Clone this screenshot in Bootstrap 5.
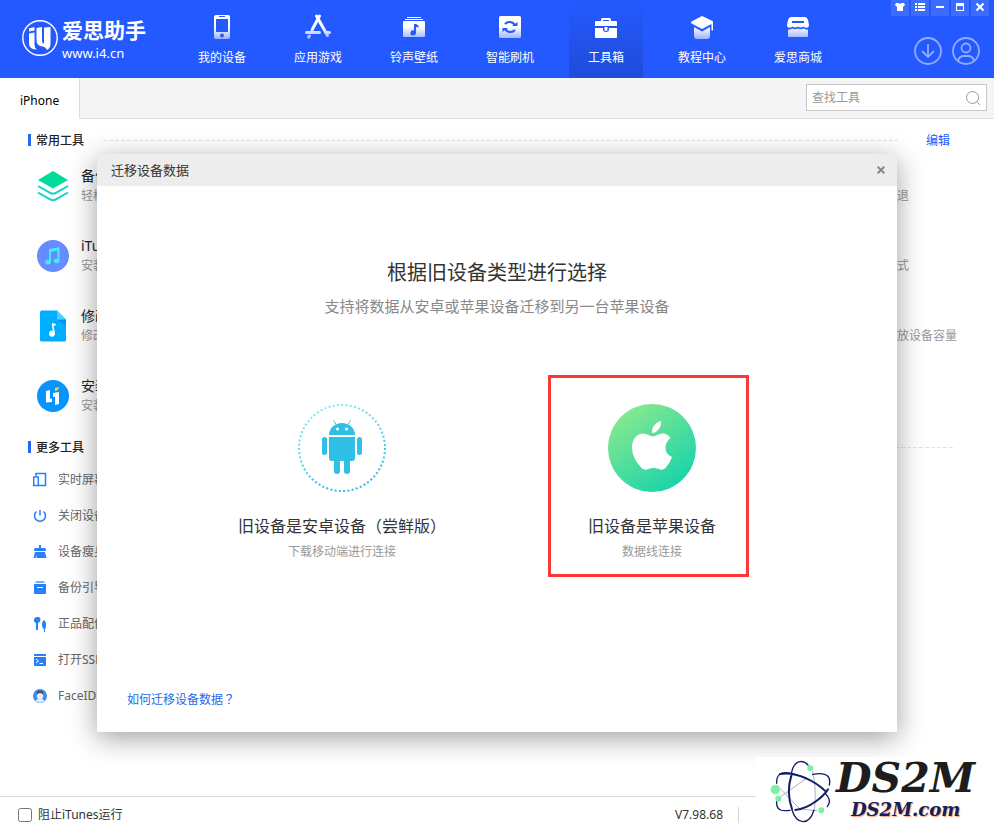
<!DOCTYPE html>
<html lang="zh-CN">
<head>
<meta charset="utf-8">
<meta name="viewport" content="width=device-width, initial-scale=1">
<title>爱思助手</title>
<link href="https://cdn.jsdelivr.net/npm/bootstrap@5.3.0/dist/css/bootstrap.min.css" rel="stylesheet">
<style>
body{font-family:"Noto Sans","Noto Sans CJK SC",sans-serif;font-size:12px;line-height:20px;color:#333;background:#fff}
svg{display:block;flex:none}
button{font:inherit;border:0;background:none;padding:0;color:inherit}
.app-head{background:#2459ff;color:#fff;min-height:78px}
.brand-box{width:185px;padding:20px 0 0 22px;gap:4px;color:#fff}
.brand-words{margin-top:-4px}
.brand-name{font-size:21px;line-height:28px;font-weight:700}
.brand-url{font-size:13px;line-height:18px}
.main-nav{gap:22px}
.main-nav a{width:74px;height:78px;padding-top:13px;color:#fff;gap:7px}
.main-nav a.active{background:linear-gradient(#2459ff,#1f4cd9)}
.win-btn{width:18px;height:16px;background:rgba(255,255,255,.11)}
.win-set{gap:2px;padding-right:5px}
.round-set{gap:10px;padding:21px 14px 0 0}
.tab-strip{background:#f5f5f5;border-bottom:1px solid #dcdcdc;height:41px}
.tab-strip .tab-on{background:#fff;border-right:1px solid #dcdcdc;color:#000;padding:4px 20px 0;height:41px;width:80px}
.find-box{width:181px;height:27px;border:1px solid #c8c8c8;background:#fff;margin:6px 7px 0 0;padding:0 5px}
.find-box input{border:0;outline:0;min-width:0;width:100%;padding:0;font-size:12px;background:none}
.find-box input::placeholder{color:#999}
main{padding-top:11px}
.sec-head{padding-left:28px;height:20px}
.sec-head h2{font-size:12px;line-height:14px;height:12px;margin:0;border-left:3px solid #2468f2;padding-left:5px;color:#222}
.sec-head .rule{height:1px;margin-left:19px;background:repeating-linear-gradient(90deg,#e4e4e4 0 4px,transparent 4px 6px)}
.sec-head a{color:#2459ff;margin:0 44px 0 28px;padding-top:2px}
.end-41{margin-right:41px}
.tool-list{padding:1px 0 6px}
.tool-row{height:70px;padding-left:37px;color:#999}
.tool-row h3{font-size:14px;line-height:20px;margin:0;color:#222;font-weight:400}
.tool-row p{line-height:20px;margin:0}
.tool-row .side{width:109px;padding-top:20px;line-height:20px}
.more-list{padding:5px 0 0 32px}
.more-list a{height:36px;gap:10px;color:#666}
.layer{top:35px}
.dlg{width:800px;max-width:100%;background:#fff;box-shadow:0 6px 26px rgba(0,0,0,.38)}
.dlg-top{background:#ededed;height:32px;padding:0 12px 0 14px}
.dlg-top h1{font-size:13px;line-height:18px;margin:0;font-weight:400}
.dlg-body{padding:73px 0 22px}
.dlg-body h2{font-size:20px;line-height:28px;margin:0 0 9px;font-weight:400}
.dlg-body .hint{font-size:15px;color:#888;margin:0 0 59px}
.choices{max-width:620px}
.choice{min-width:201px;border:3px solid transparent!important;padding:26px 0 12px!important}
.choice.picked{border-color:#fb3838!important;padding-left:7px!important;margin-right:7px}
.choice strong{font-size:16px;line-height:24px;font-weight:400;margin:22px 0 4px;white-space:nowrap}
.choice small{font-size:12px;color:#999}
.punct{font-family:"Noto Sans CJK TC",sans-serif}
.help-link{color:#2468f2;margin:112px 0 0 30px;display:inline-block}
footer{border-top:1px solid #dcdcdc;min-height:31px;padding:5px 255px 0 18px}
footer input{width:14px;height:14px;margin:0}
footer .ver{padding-right:15px;border-right:1px solid #d5d5d5;line-height:16px}
.block-set{gap:6px}
.stamp{right:0;bottom:0;width:238px;height:70px;background:#fff;padding-left:14px}
.stamp-a{font:italic 900 41px/42px "DejaVu Serif",serif;color:#1d1d1d;padding-left:2px}
.stamp-b{font:italic 700 18px/22px "DejaVu Serif",serif;color:#14205c;text-shadow:1px 1px 1px #f5a27c;padding-left:17px}
</style>
<script src="https://cdn.jsdelivr.net/npm/bootstrap@5.3.0/dist/js/bootstrap.bundle.min.js"></script>
</head>
<body class="d-flex flex-column min-vh-100 position-relative">
<svg width="0" height="0" class="position-absolute" aria-hidden="true"><defs>
<linearGradient id="fade" gradientUnits="userSpaceOnUse" x1="0" y1="3" x2="0" y2="27"><stop offset=".45" stop-color="#fff"/><stop offset="1" stop-color="#91abff"/></linearGradient>
<linearGradient id="ring" x1=".2" y1="0" x2=".6" y2="1"><stop offset="0" stop-color="#8ae9f3"/><stop offset="1" stop-color="#2dbbe5"/></linearGradient>
<linearGradient id="green" x1=".15" y1=".05" x2=".8" y2=".95"><stop offset="0" stop-color="#8be98f"/><stop offset="1" stop-color="#17d3aa"/></linearGradient>
</defs></svg>

<header class="app-head d-flex">
  <a href="#" class="brand-box d-flex text-decoration-none">
    <svg width="36" height="36" viewBox="0 0 36 36"><circle cx="18" cy="18" r="17.200" fill="none" stroke="#fff" stroke-width="1.400"/><path fill="#fff" d="M7 8.500L12.500 7v3.500L7 11.500zM7 13.500l5.500-1V25q0 3 2.500 4.500-8 0-8-6zM14.500 8L20 7v14q0 2.500 2 2.500V7.500L28.500 7v17q0 4-3.500 6-1-3-4-3.500-6.500-.5-6.500-6z"/></svg>
    <span class="brand-words"><span class="brand-name d-block">爱思助手</span><span class="brand-url d-block">www.i4.cn</span></span>
  </a>
  <nav class="main-nav d-flex text-center">
    <a href="#" class="d-flex flex-column align-items-center text-decoration-none"><svg width="28" height="28" viewBox="0 0 28 28"><path fill="url(#fade)" fill-rule="evenodd" d="M8 2h12a2 2 0 0 1 2 2v20a2 2 0 0 1-2 2H8a2 2 0 0 1-2-2V4a2 2 0 0 1 2-2zM8 6v13h12V6zM11 3v1h6V3zM14 20.500a2 2 0 1 0 .01 0z"/></svg><span class="pt-1 lh-1">我的设备</span></a>
    <a href="#" class="d-flex flex-column align-items-center text-decoration-none"><svg width="28" height="28" viewBox="0 0 28 28" fill="none" stroke="url(#fade)" stroke-width="3" stroke-linecap="round"><path d="M12.500 3l11 19.500M15.500 3L8 17M2.500 19.500h13M21.500 19.500h4M5.500 23l-1 1.200"/></svg><span class="pt-1 lh-1">应用游戏</span></a>
    <a href="#" class="d-flex flex-column align-items-center text-decoration-none"><svg width="28" height="28" viewBox="0 0 28 28"><path fill="#fff" d="M7 4h14v1H7zM5 6h18v1H5z"/><path fill="url(#fade)" fill-rule="evenodd" d="M4 8h20a1 1 0 0 1 1 1v14a1 1 0 0 1-1 1H4a1 1 0 0 1-1-1V9a1 1 0 0 1 1-1zM14 11v6.500a2.800 2.500 0 1 0 2 2.500v-6q2 0 3 .5-.5-3-3-3.500z"/></svg><span class="pt-1 lh-1">铃声壁纸</span></a>
    <a href="#" class="d-flex flex-column align-items-center text-decoration-none"><svg width="28" height="28" viewBox="0 0 28 28"><rect x="3" y="3" width="22" height="22" rx="1.500" fill="url(#fade)"/><g fill="none" stroke="#2459ff" stroke-width="2"><path d="M9 11a6 6 0 0 1 10 1.500M19 17a6 6 0 0 1-10-1.500"/></g><path fill="#2459ff" d="M16 13h5.500V9zM12 15H6.500V19z"/></svg><span class="pt-1 lh-1">智能刷机</span></a>
    <a href="#" class="active d-flex flex-column align-items-center text-decoration-none" aria-current="page"><svg width="28" height="28" viewBox="0 0 28 28"><path fill="#fff" fill-rule="evenodd" d="M9 8V6.500Q9 5 10.500 5h7Q19 5 19 6.500V8h5a1 1 0 0 1 1 1v4H3V9a1 1 0 0 1 1-1zM11 8h6V7h-6zM3 15h8v1a3 3 0 0 0 6 0v-1h8v9a1 1 0 0 1-1 1H4a1 1 0 0 1-1-1zM12.500 14h3v2.500a1.500 1.500 0 0 1-3 0z"/></svg><span class="pt-1 lh-1">工具箱</span></a>
    <a href="#" class="d-flex flex-column align-items-center text-decoration-none"><svg width="28" height="28" viewBox="0 0 28 28"><path fill="#fff" d="M14 3l10.500 5q.5.300.5 1v8.500h-1.500V11L14 16 3.500 10.500q-1-1 0-2z"/><path fill="url(#fade)" d="M6 14l8 4.500 8-4.500v9q0 3-3 3H9q-3 0-3-3z"/></svg><span class="pt-1 lh-1">教程中心</span></a>
    <a href="#" class="d-flex flex-column align-items-center text-decoration-none"><svg width="28" height="28" viewBox="0 0 28 28"><path fill="#fff" fill-rule="evenodd" d="M7 4h14q2 0 3 3l1 5q0 2-1.500 2.500-2 1-4-1-2.500 2-5.500 0-3 2-5.500 0-2 2-4 1Q3 14 3 12l1-5q1-3 3-3zM8 8v2h12V8z"/><path fill="url(#fade)" d="M4 16.500q2 .5 4.500-1 2.500 1.500 5.500 0 3 1.500 5.500 0 2.500 1.500 4.500 1V23a1 1 0 0 1-1 1H5a1 1 0 0 1-1-1z"/></svg><span class="pt-1 lh-1">爱思商城</span></a>
  </nav>
  <div class="ms-auto d-flex flex-column align-items-end">
    <div class="win-set d-flex">
      <button class="win-btn" aria-label="皮肤"><svg width="18" height="16" viewBox="0 0 18 16"><path fill="#fff" d="M5 3h2q2 1.500 4 0h2l1 2-2 2v4H6V7L4 5z"/></svg></button>
      <button class="win-btn" aria-label="菜单"><svg width="18" height="16" viewBox="0 0 18 16"><path fill="#fff" d="M4 3h2v2H4zm3 0h7v2H7zM4 6h2v2H4zm3 0h7v2H7zM4 9h2v2H4zm3 0h7v2H7z"/></svg></button>
      <button class="win-btn" aria-label="最小化"><svg width="18" height="16" viewBox="0 0 18 16"><path fill="#fff" d="M5 6h8v2H5z"/></svg></button>
      <button class="win-btn" aria-label="最大化"><svg width="18" height="16" viewBox="0 0 18 16"><path fill="#fff" fill-rule="evenodd" d="M5 3h8v8H5zM6 6v4h6V6z"/></svg></button>
      <button class="win-btn" aria-label="关闭"><svg width="18" height="16" viewBox="0 0 18 16"><path stroke="#fff" stroke-width="2" d="M5.500 3.500l7 7m0-7l-7 7"/></svg></button>
    </div>
    <div class="round-set d-flex">
      <button aria-label="下载"><svg width="28" height="28" viewBox="0 0 28 28" fill="none" stroke="#92acff" stroke-width="1.800"><circle cx="14" cy="14" r="13"/><path d="M14 7v13M8 14l6 6 6-6"/></svg></button>
      <button aria-label="账户"><svg width="28" height="28" viewBox="0 0 28 28" fill="none" stroke="#92acff" stroke-width="1.800"><circle cx="14" cy="14" r="13"/><circle cx="14" cy="11" r="4.500"/><path d="M6 24q1-5 6-5h4q5 0 6 5"/></svg></button>
    </div>
  </div>
</header>

<div class="tab-strip d-flex justify-content-between">
  <a href="#" class="tab-on d-flex align-items-center text-decoration-none">iPhone</a>
  <div class="find-box d-flex align-items-center">
    <input type="text" placeholder="查找工具" aria-label="查找工具">
    <svg width="16" height="16" viewBox="0 0 16 16" fill="none" stroke="#999"><circle cx="7.500" cy="7.500" r="6"/><path d="M12 12l3 3"/></svg>
  </div>
</div>

<main class="flex-grow-1 position-relative">
  <div class="sec-head d-flex align-items-center"><h2>常用工具</h2><div class="rule flex-grow-1"></div><a href="#" class="text-decoration-none">编辑</a></div>
  <div class="tool-list">
    <div class="tool-row d-flex align-items-center">
      <svg width="32" height="32" viewBox="0 0 32 32"><path fill="#00dc9c" d="M16 1l15 9-15 8.500L1 10z"/><path fill="none" stroke="#12d2c8" stroke-width="2" d="M1 16l12.500 7q2.500 1.300 5 0L31 16M1 22.500l12.500 7q2.500 1.300 5 0l12.500-7"/></svg>
      <div class="flex-grow-1 ps-2 ms-1"><h3>备份</h3><p>轻松</p></div><div class="side">后退</div>
    </div>
    <div class="tool-row d-flex align-items-center">
      <svg width="32" height="32" viewBox="0 0 32 32"><circle cx="16" cy="16" r="16" fill="#668cff"/><path fill="none" stroke="#44eafa" stroke-width="2" d="M13 22V10l8.500-1.500v12"/><path fill="#44eafa" d="M12 9l10-1.500v3L12 12z"/><ellipse cx="11" cy="22.300" rx="2.800" ry="2.200" fill="#44eafa"/><ellipse cx="19.500" cy="21" rx="2.800" ry="2.200" fill="#44eafa"/></svg>
      <div class="flex-grow-1 ps-2 ms-1"><h3>iTunes</h3><p>安装</p></div><div class="side">格式</div>
    </div>
    <div class="tool-row d-flex align-items-center">
      <svg width="32" height="32" viewBox="0 0 32 32"><path fill="#00aeff" d="M4 .5h16l9 9V30a1.500 1.500 0 0 1-1.500 1.500h-23A1.500 1.500 0 0 1 3 30V2z"/><path fill="#0a8df2" d="M20 9.500h9V15z"/><path fill="#4bd0ff" d="M20 .5l9 9h-9z"/><path fill="#fff" d="M15 13l4 1-1 2-1.500-.5 1.500 7.500a3.100 3.100 0 1 1-2-2.200l-1.200-5.300z"/></svg>
      <div class="flex-grow-1 ps-2 ms-1"><h3>修改</h3><p>修改</p></div><div class="side">释放设备容量</div>
    </div>
    <div class="tool-row d-flex align-items-center">
      <svg width="32" height="32" viewBox="0 0 32 32"><circle cx="16" cy="16" r="16" fill="#0894ff"/><path fill="#fff" d="M9 11l4-1v9l2-.5v3.500L9 22.500zM16 13l6-1v12l-4 1V16.500l-2 .5z"/><path fill="#ffd21c" d="M18 8l4-1q0 3-4 4z"/></svg>
      <div class="flex-grow-1 ps-2 ms-1"><h3>安装</h3><p>安装</p></div>
    </div>
  </div>
  <div class="sec-head d-flex align-items-center"><h2>更多工具</h2><div class="rule end-41 flex-grow-1"></div></div>
  <nav class="more-list d-flex flex-column align-items-start">
    <a href="#" class="d-flex align-items-center text-decoration-none"><svg width="16" height="16" viewBox="0 0 16 16" fill="none" stroke="#2680f8" stroke-width="1.500"><path d="M4 4V1.500h9.500v12H7M1.700 5h4.600v8.500H1.700z"/></svg>实时屏幕</a>
    <a href="#" class="d-flex align-items-center text-decoration-none"><svg width="16" height="16" viewBox="0 0 16 16" fill="none" stroke="#2680f8" stroke-width="1.600"><path d="M8 2v5.500M4.500 3.500a5.500 5.500 0 1 0 7 0"/></svg>关闭设备</a>
    <a href="#" class="d-flex align-items-center text-decoration-none"><svg width="16" height="16" viewBox="0 0 16 16" fill="#2680f8"><path d="M7 1h2v3h4q1 0 1 3H2q0-3 1-3h4zM3 8h10l1.500 6h-10l.5-3-1.500 3h-2z"/></svg>设备瘦身</a>
    <a href="#" class="d-flex align-items-center text-decoration-none"><svg width="16" height="16" viewBox="0 0 16 16" fill="#2680f8"><path fill="#7db3fb" d="M4 1h8l1 2H3z"/><path d="M2 4h12v9q0 1-1 1H3q-1 0-1-1z"/><path fill="#fff" d="M5 7h6v1H5z"/></svg>备份引导</a>
    <a href="#" class="d-flex align-items-center text-decoration-none"><svg width="16" height="16" viewBox="0 0 16 16" fill="#2680f8"><path d="M4 1h3q2 1 1.500 3Q8 6.500 6 7v7H4V7Q1.500 6 2 3zM12 4q2 1 2 5 0 3-1 4v3h-1v-3q-2-1-2-4 0-4 2-5z"/></svg>正品配件</a>
    <a href="#" class="d-flex align-items-center text-decoration-none"><svg width="16" height="16" viewBox="0 0 16 16"><path fill="#2680f8" d="M2 2h12v2H2zM2 5h12v9H2z"/><path fill="none" stroke="#fff" d="M4 7l2.500 2L4 11M7.500 11.500H11"/></svg>打开SSH</a>
    <a href="#" class="d-flex align-items-center text-decoration-none"><svg width="16" height="16" viewBox="0 0 16 16"><circle cx="8" cy="8" r="7" fill="#3d8ef5"/><ellipse cx="8" cy="7.500" rx="3.200" ry="4" fill="#f3ebe8"/><path fill="#454e65" d="M4.700 7Q4 2.500 8 2.500T11.300 7Q10 5 8 5T4.700 7z"/><path fill="#dceaff" d="M3.500 13q1-2.500 4.500-2.500t4.500 2.500Q8 16.500 3.500 13z"/></svg>FaceID</a>
  </nav>

  <div class="layer position-absolute start-0 end-0 d-flex justify-content-center">
    <section class="dlg" role="dialog" aria-labelledby="dlgTitle">
      <div class="dlg-top d-flex align-items-center justify-content-between"><h1 id="dlgTitle">迁移设备数据</h1><button aria-label="关闭对话框"><svg width="8" height="8" viewBox="0 0 8 8" stroke="#888" stroke-width="2"><path d="M.7.700l6.600 6.600M7.300.700L.7 7.300"/></svg></button></div>
      <div class="dlg-body">
        <h2 class="text-center">根据旧设备类型进行选择</h2>
        <p class="hint text-center">支持将数据从安卓或苹果设备迁移到另一台苹果设备</p>
        <div class="choices row g-0 mx-auto">
          <div class="col-6 d-flex justify-content-center"><button class="choice d-flex flex-column align-items-center">
            <svg width="88" height="88" viewBox="0 0 88 88"><circle cx="44" cy="44" r="43" fill="none" stroke="url(#ring)" stroke-width="2" stroke-dasharray="2 2.288"/><g fill="#30c0e7"><path d="M31 31a13 12 0 0 1 26 0zM31 33h26v21a3 3 0 0 1-3 3H34a3 3 0 0 1-3-3z"/><rect x="24" y="33" width="5" height="18" rx="2.500"/><rect x="59" y="33" width="5" height="18" rx="2.500"/><path d="M36 55h6v12a3 3 0 0 1-6 0zM46 55h6v12a3 3 0 0 1-6 0z"/></g><path stroke="#30c0e7" d="M35.500 16.500l2.500 4M52.500 16.500l-2.500 4"/><circle cx="39.500" cy="25" r="1.500" fill="#fff"/><circle cx="48.500" cy="25" r="1.500" fill="#fff"/></svg>
            <strong>旧设备是安卓设备（尝鲜版）</strong><small>下载移动端进行连接</small></button></div>
          <div class="col-6 d-flex justify-content-center"><button class="choice picked d-flex flex-column align-items-center">
            <svg width="88" height="88" viewBox="0 0 88 88"><circle cx="44" cy="44" r="44" fill="url(#green)"/><path fill="#fff" d="M53 17q.5 5-2.500 8.500T44 29q-.5-4.500 2.500-8T53 17zM45 32.500c3 0 5-3 10-3q4.500 0 7.500 4.500-5 4-5 9.500 0 7 6.500 9.500-2 6-6.500 11-2.500 2.500-5.500 1.500c-5-2-8-2-13 0q-3 1-5.500-1.500Q24 54 24 43.500c0-9 5.500-14 11-14 4 0 7 3 10 3z"/></svg>
            <strong>旧设备是苹果设备</strong><small>数据线连接</small></button></div>
        </div>
        <a href="#" class="help-link text-decoration-none">如何迁移设备数据<span class="punct" lang="zh-TW">？</span></a>
      </div>
    </section>
  </div>
</main>

<footer class="d-flex align-items-center justify-content-between">
  <div class="block-set d-flex align-items-center"><input type="checkbox" id="block"><label for="block">阻止iTunes运行</label></div>
  <span class="ver">V7.98.68</span>
</footer>

<div class="stamp position-absolute d-flex">
  <svg width="64" height="68" viewBox="60 56 192 204" fill="none" stroke="#121e66" stroke-linecap="round"><path stroke="#aab0cc" stroke-width="3" d="M188 100q12 50 6 110M80 140l70 72 50 5M85 180l85-60"/><path stroke-width="4" d="M125 102C132 66 158 62 174 80M125 212C140 262 178 262 192 215M80 135C78 85 130 105 170 120M80 190c-2 30 20 28 40 26M188 108c40-8 56 5 50 32M232 205c12-15 4-30-5-38"/><path stroke-width="6" d="M124 112q-16 50 2 100M90 107c50-10 110 25 137 52M136 215c45-5 85-42 98-62"/><g fill="#7df0a7" stroke="none"><circle cx="181" cy="90" r="9"/><circle cx="76" cy="154" r="14"/><circle cx="85" cy="181" r="9"/><circle cx="214" cy="216" r="9"/></g></svg>
  <div><div class="stamp-a">DS2M</div><div class="stamp-b">DS2M.com</div></div>
</div>
</body>
</html>
